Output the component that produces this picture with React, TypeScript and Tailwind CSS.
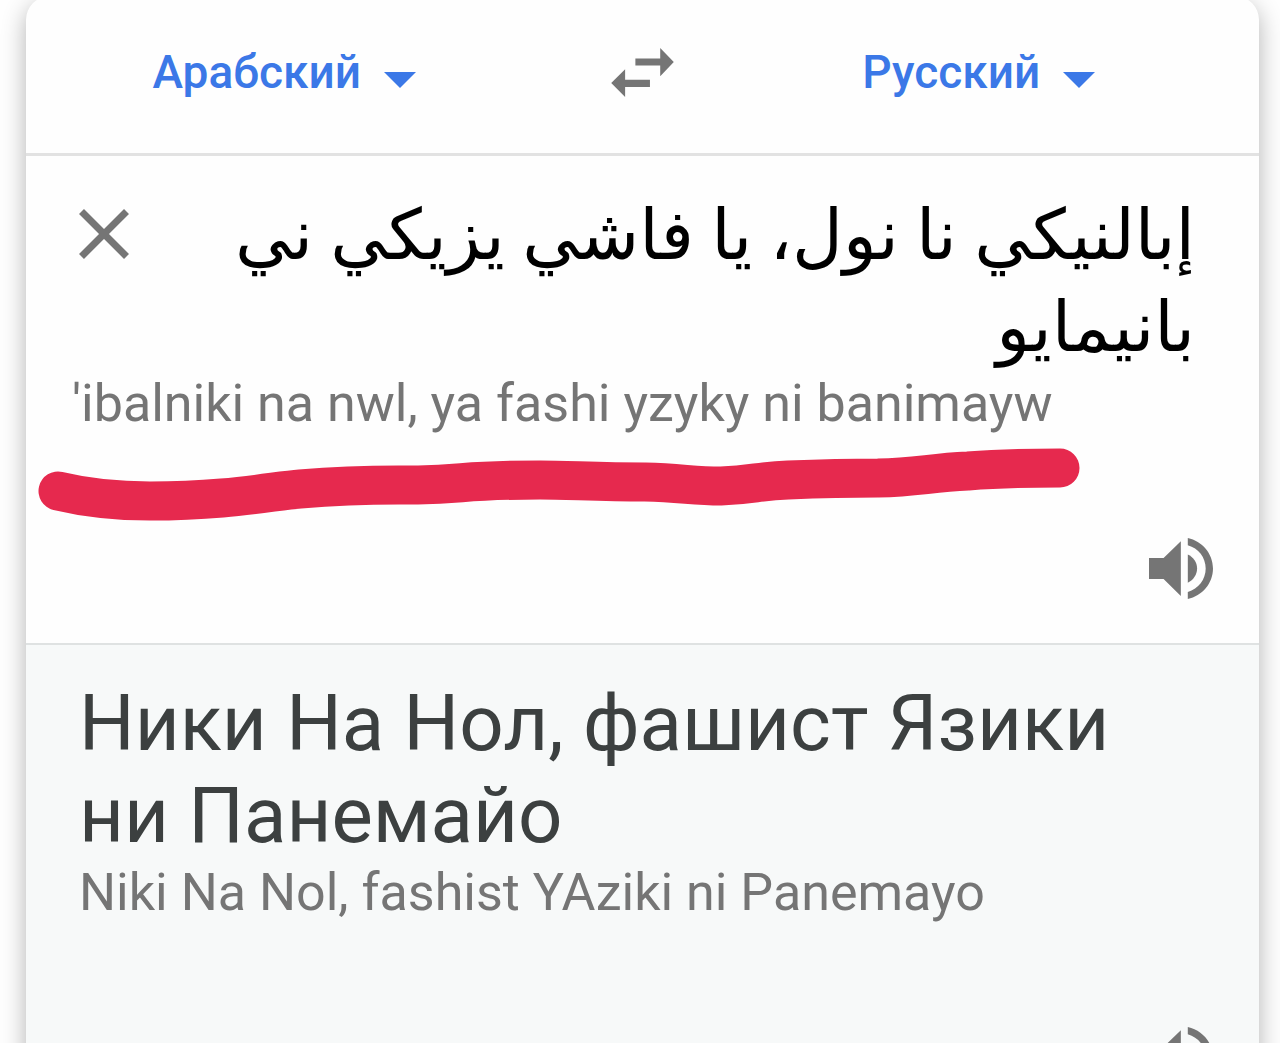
import { ReactNode, useState } from 'react';

const SOURCE_TEXT = 'إبالنيكي نا نول، يا فاشي يزيكي ني بانيمايو';

interface LanguageSelectProps {
    label: string;
    value: string;
    options: string[];
    onChange: (value: string) => void;
}

function LanguageSelect({ label, value, options, onChange }: LanguageSelectProps) {
    return (
        <label className="flex items-center gap-[23px] text-[#3b78e7]">
            <select
                aria-label={label}
                value={value}
                onChange={e => onChange(e.target.value)}
                className="field-sizing-content appearance-none bg-transparent text-[46px] leading-[56px] font-medium outline-none cursor-pointer"
            >
                {options.map(option => (
                    <option key={option} value={option}>{option}</option>
                ))}
            </select>
            <svg viewBox="0 0 32 16" className="mt-4 h-4 w-8 shrink-0" fill="currentColor" aria-hidden="true">
                <path d="M0 0h32L16 16z" />
            </svg>
        </label>
    );
}

function IconButton({ label, onClick, children }: { label: string; onClick?: () => void; children: ReactNode }) {
    return (
        <button type="button" aria-label={label} onClick={onClick} className="block shrink-0 text-[#757575] cursor-pointer">
            {children}
        </button>
    );
}

function SwapIcon() {
    return (
        <svg viewBox="0 0 189 148" className="h-[49px] w-[63px]" fill="currentColor">
            <path d="M73 32h75V0l41 42-41 43V53H73z" />
            <path d="M117 118H42v30L0 106l42-42v32h75z" />
        </svg>
    );
}

function CloseIcon() {
    return (
        <svg viewBox="0 0 50 50" className="size-[50px]" fill="none" stroke="currentColor" strokeWidth="7">
            <path d="M2.5 2.5l45 45M47.5 2.5l-45 45" />
        </svg>
    );
}

function SpeakerIcon() {
    return (
        <svg viewBox="0 0 193 184" className="h-[61px] w-16" fill="currentColor">
            <path d="M0 60h44l52-50v165l-52-51H0z" />
            <path d="M117 50c17 8 28 24 28 42s-11 35-28 43z" />
            <path d="M117 0c43 9 76 47 76 92s-33 83-76 92v-21c32-10 54-38 54-71s-22-61-54-70z" />
        </svg>
    );
}

// Freehand marker stroke under the transliteration
function MarkerStroke() {
    return (
        <svg viewBox="0 0 1042 73" className="pointer-events-none absolute top-[292px] left-3 h-[73px] w-[1042px]" fill="none" aria-hidden="true">
            <path
                d="M20 43C45 49 74 53 112 53C190 53 235 43 262 41C320 36 350 37 380 37C430 36 425 32 502 32C530 32 560 34 607 34C645 35 655 38 683 38C715 37 720 33 750 32C800 30 810 30 840 30C880 29 890 25 930 23C970 20 990 20 1022 20"
                stroke="#e6294e"
                strokeWidth="39"
                strokeLinecap="round"
                strokeLinejoin="round"
            />
        </svg>
    );
}

export default function App() {
    const [from, setFrom] = useState('Арабский');
    const [to, setTo] = useState('Русский');
    const [source, setSource] = useState(SOURCE_TEXT);

    const swap = () => {
        setFrom(to);
        setTo(from);
    };

    return (
        <div className="h-screen overflow-hidden bg-[#fefefe] pr-[21px] pl-[26px] font-[Roboto,'DejaVu_Sans',sans-serif]">
            <main className="-mt-1 flex min-h-full flex-col overflow-hidden rounded-t-3xl bg-[#fefefe] shadow-[0_8px_24px_rgba(0,0,0,0.3)]">
                {/* Language bar */}
                <header className="grid grid-cols-[1fr_200px_1fr] items-center border-b-[3px] border-[#e2e2e2] pt-12 pb-[53px]">
                    <div className="flex justify-center">
                        <LanguageSelect label="Исходный язык" value={from} options={['Арабский', 'Русский']} onChange={setFrom} />
                    </div>
                    <div className="flex justify-center">
                        <IconButton label="Поменять языки" onClick={swap}><SwapIcon /></IconButton>
                    </div>
                    <div className="flex justify-center pr-11">
                        <LanguageSelect label="Язык перевода" value={to} options={['Арабский', 'Русский']} onChange={setTo} />
                    </div>
                </header>

                {/* Source text */}
                <section className="relative border-b-2 border-[#dfe2e2] pt-[33px] pb-11">
                    <div className="flex items-start gap-10 pr-16 pl-[53px]">
                        <div className="pt-5">
                            <IconButton label="Очистить" onClick={() => setSource('')}><CloseIcon /></IconButton>
                        </div>
                        <textarea
                            dir="rtl"
                            lang="ar"
                            rows={2}
                            aria-label="Исходный текст"
                            value={source}
                            onChange={e => setSource(e.target.value)}
                            className="min-w-0 flex-1 resize-none overflow-hidden bg-transparent text-[70px] leading-[92px] text-black outline-none"
                        />
                    </div>
                    <p className="pl-[46px] text-[52px] leading-[62px] text-[#757575]">'ibalniki na nwl, ya fashi yzyky ni banimayw</p>
                    <MarkerStroke />
                    <div className="mt-[103px] flex justify-end pr-[46px]">
                        <IconButton label="Прослушать"><SpeakerIcon /></IconButton>
                    </div>
                </section>

                {/* Translation */}
                <section className="flex-1 bg-[#f7f9f9] pt-[33px] pr-[46px] pb-11 pl-[53px]">
                    <p className="pr-10 text-[78px] leading-[92px] text-[#3c4040]">Ники На Нол, фашист Язики ни Панемайо</p>
                    <p className="text-[52px] leading-[62px] text-[#757575]">Niki Na Nol, fashist YAziki ni Panemayo</p>
                    <div className="mt-[103px] flex justify-end">
                        <IconButton label="Прослушать перевод"><SpeakerIcon /></IconButton>
                    </div>
                </section>
            </main>
        </div>
    );
}
